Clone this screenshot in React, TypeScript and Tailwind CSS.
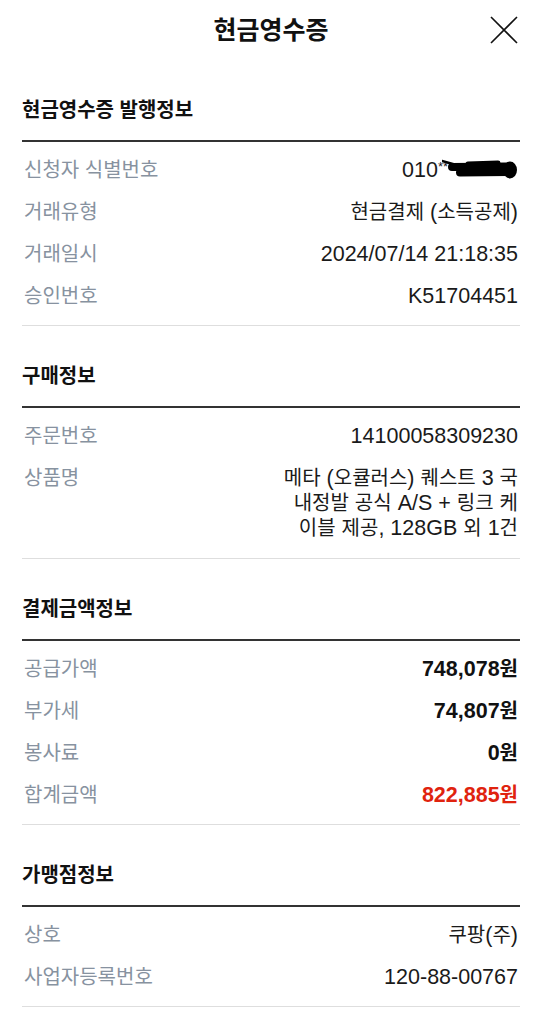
import React from "react";

const FONT = '"Liberation Sans", "Noto Sans CJK KR", sans-serif';

type Row = { label: string; value: React.ReactNode; kind?: "bold" | "red" | "multi" };

function Mix({ text }: { text: string }) {
  const parts = text.split(/([\u3131-\uD79D]+)/).filter((p) => p.length > 0);
  return (
    <>
      {parts.map((p, i) =>
        /[\u3131-\uD79D]/.test(p) ? (
          <span key={i} className="text-[20px]">
            {p}
          </span>
        ) : (
          <span key={i} className="text-[21.5px]">
            {p}
          </span>
        )
      )}
    </>
  );
}

function Redact() {
  return (
    <svg width="76" height="22" viewBox="4 0 76 22" className="inline-block align-middle -ml-[6px] -mt-[2px]">
      <path d="M4 3 L22 8" stroke="#000" strokeWidth="2.5" strokeLinecap="round" fill="none" />
      <path d="M14 9 L68 8.5" stroke="#000" strokeWidth="8" strokeLinecap="round" fill="none" />
      <path d="M22 14.5 L70 14" stroke="#000" strokeWidth="8" strokeLinecap="round" fill="none" />
      <ellipse cx="72" cy="12" rx="7" ry="8.5" fill="#000" />
      <path d="M30 6 L60 5" stroke="#000" strokeWidth="5" strokeLinecap="round" fill="none" />
    </svg>
  );
}

function Section({ title, rows }: { title: string; rows: Row[] }) {
  return (
    <section className="px-[22px]">
      <h2 className="pt-[38px] pb-[18px] text-[20px] leading-[24px] font-bold text-[#111] border-b-2 border-[#333]">
        {title}
      </h2>
      <div className="flex flex-col gap-[18px] pt-[16px] pb-[17px] border-b border-[#dedede]">
        {rows.map((r, i) => (
          <div key={i} className="flex justify-between items-start px-[2px]">
            <span className="text-[20px] leading-[24px] text-[#8792a0] whitespace-nowrap">{r.label}</span>
            <span
              className={
                r.kind === "bold"
                  ? "text-[20px] leading-[24px] font-bold text-[#111] text-right whitespace-nowrap"
                  : r.kind === "red"
                  ? "text-[20px] leading-[24px] font-bold text-[#e0230e] text-right whitespace-nowrap"
                  : r.kind === "multi"
                  ? "text-[20px] leading-[25px] text-[#1a1a1a] text-right"
                  : "text-[20px] leading-[24px] text-[#1a1a1a] text-right whitespace-nowrap"
              }
            >
              {typeof r.value === "string" ? <Mix text={r.value} /> : r.value}
            </span>
          </div>
        ))}
      </div>
    </section>
  );
}

export default function App() {
  return (
    <div className="w-[542px] min-h-[1024px] bg-white" style={{ fontFamily: FONT }}>
      <header className="h-[60px] grid grid-cols-[1fr_auto_1fr] items-center">
        <div />
        <h1 className="text-[25px] leading-[30px] font-bold text-[#111]">현금영수증</h1>
        <div className="flex justify-end pr-[24px]">
          <svg width="28" height="28" viewBox="0 0 28 28">
            <path d="M1 1 L27 27 M27 1 L1 27" stroke="#111" strokeWidth="1.6" fill="none" />
          </svg>
        </div>
      </header>

      <Section
        title="현금영수증 발행정보"
        rows={[
          {
            label: "신청자 식별번호",
            value: (
              <span className="inline-flex items-center">
                <span className="text-[21.5px]">010</span>
                <span className="text-[13px] leading-[13px] -mt-[8px]">**</span>
                <Redact />
              </span>
            ),
          },
          { label: "거래유형", value: "현금결제 (소득공제)" },
          { label: "거래일시", value: "2024/07/14 21:18:35" },
          { label: "승인번호", value: "K51704451" },
        ]}
      />

      <Section
        title="구매정보"
        rows={[
          { label: "주문번호", value: "14100058309230" },
          {
            label: "상품명",
            kind: "multi",
            value: (
              <>
                <Mix text="메타 (오큘러스) 퀘스트 3 국" />
                <br />
                <Mix text="내정발 공식 A/S + 링크 케" />
                <br />
                <Mix text="이블 제공, 128GB 외 1건" />
              </>
            ),
          },
        ]}
      />

      <Section
        title="결제금액정보"
        rows={[
          { label: "공급가액", value: "748,078원", kind: "bold" },
          { label: "부가세", value: "74,807원", kind: "bold" },
          { label: "봉사료", value: "0원", kind: "bold" },
          { label: "합계금액", value: "822,885원", kind: "red" },
        ]}
      />

      <Section
        title="가맹점정보"
        rows={[
          { label: "상호", value: "쿠팡(주)" },
          { label: "사업자등록번호", value: "120-88-00767" },
        ]}
      />
    </div>
  );
}
